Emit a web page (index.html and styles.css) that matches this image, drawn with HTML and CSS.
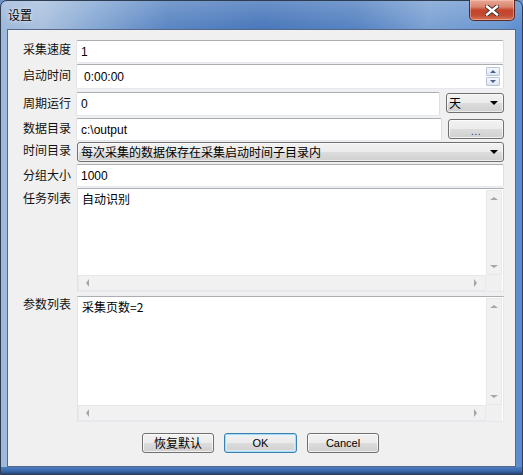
FILE: index.html
```html
<!DOCTYPE html>
<html lang="zh-CN">
<head>
<meta charset="utf-8">
<title>设置</title>
<link rel="stylesheet" href="styles.css">
</head>
<body>
<div class="window">
  <div class="titlebar">
    <span class="title">设置</span>
    <div class="close">
      <svg width="14" height="11" viewBox="0 0 14 11">
        <path d="M2 1.5 L12 9.5 M12 1.5 L2 9.5" stroke="#3a2a2a" stroke-width="4.2" stroke-linecap="square" fill="none"/>
        <path d="M2 1.5 L12 9.5 M12 1.5 L2 9.5" stroke="#ffffff" stroke-width="2.4" stroke-linecap="square" fill="none"/>
      </svg>
    </div>
  </div>
  <div class="client">
    <div class="row r1">
      <div class="label">采集速度</div>
      <div class="edit grow"><span class="val">1</span></div>
    </div>
    <div class="row r2">
      <div class="label">启动时间</div>
      <div class="edit grow spinedit">
        <span class="val time">0:00:00</span>
        <div class="spin">
          <div class="spinbtn"><span class="sarrow up"></span></div>
          <div class="spinbtn"><span class="sarrow down"></span></div>
        </div>
      </div>
    </div>
    <div class="row r3">
      <div class="label">周期运行</div>
      <div class="edit grow"><span class="val">0</span></div>
      <div class="combo small"><span class="ctext">天</span><span class="carrow"></span></div>
    </div>
    <div class="row r4">
      <div class="label">数据目录</div>
      <div class="edit grow"><span class="val">c:\output</span></div>
      <div class="btn browse">...</div>
    </div>
    <div class="row r5">
      <div class="label">时间目录</div>
      <div class="combo wide grow"><span class="ctext">每次采集的数据保存在采集启动时间子目录内</span><span class="carrow"></span></div>
    </div>
    <div class="row r6">
      <div class="label">分组大小</div>
      <div class="edit grow"><span class="val">1000</span></div>
    </div>
    <div class="row r7">
      <div class="label">任务列表</div>
      <div class="memo grow">
        <div class="memotext">自动识别</div>
        <div class="vscroll"><span class="sa up"></span><span class="sa down"></span></div>
        <div class="hscroll"><span class="sa left"></span><span class="sa right"></span></div>
        <div class="corner"></div>
      </div>
    </div>
    <div class="row r8">
      <div class="label">参数列表</div>
      <div class="memo grow">
        <div class="memotext">采集页数=2</div>
        <div class="vscroll"><span class="sa up"></span><span class="sa down"></span></div>
        <div class="hscroll"><span class="sa left"></span><span class="sa right"></span></div>
        <div class="corner"></div>
      </div>
    </div>
    <div class="buttons">
      <div class="btn pb cjk">恢复默认</div>
      <div class="btn pb def">OK</div>
      <div class="btn pb">Cancel</div>
    </div>
  </div>
</div>
</body>
</html>
```

FILE: styles.css
```css
* { box-sizing: border-box; margin: 0; padding: 0; }
html, body { width: 523px; height: 475px; overflow: hidden; }
body {
  margin: 0;
  font-family: "Liberation Sans", "Noto Sans CJK SC", sans-serif;
  font-size: 12px;
  color: #000;
  background: #6e93c4;
}
.window {
  width: 523px;
  height: 475px;
  display: flex;
  flex-direction: column;
  border: 1px solid #2f3d52;
  border-radius: 7px 7px 0 0;
  padding: 0 6px 7px 6px;
  background:
    linear-gradient(0deg, #26467a 0, #3b68a8 3px, #4b7cc0 7px, rgba(0,0,0,0) 7px),
    linear-gradient(180deg, rgba(255,255,255,0.18), rgba(255,255,255,0) 28px),
    linear-gradient(90deg, #9fb9db 0%, #a9c0de 8%, #86a8d4 18%, #5a86c3 32%, #4a78bb 50%, #5683c2 68%, #7ba1d3 82%, #6a97d0 96%, #5b8cd0 100%);
}
.titlebar {
  height: 28px;
  flex: none;
  display: flex;
  align-items: flex-start;
}
.title {
  font-family: "Noto Sans CJK SC", sans-serif;
  font-size: 12px;
  line-height: 14px;
  margin: 7px 0 0 1px;
  color: #000;
  text-shadow: 0 0 5px rgba(235,242,250,0.95), 0 0 2px rgba(235,242,250,0.9);
}
.close {
  margin-left: auto;
  margin-right: 1px;
  margin-top: -1px;
  width: 46px;
  height: 21px;
  border: 1px solid #5c2b25;
  border-top: none;
  border-radius: 0 0 5px 5px;
  background: linear-gradient(180deg, #e9a897 0%, #d9846d 35%, #c4452c 50%, #c14a30 75%, #d6765a 100%);
  box-shadow: inset 0 0 0 1px rgba(255,210,200,0.45);
  display: flex;
  align-items: center;
  justify-content: center;
}
.client {
  flex: 1;
  background: #f0f0f0;
  border: 1px solid #56698a;
  padding: 10px 11px 0 15px;
  display: flex;
  flex-direction: column;
}
.row { display: flex; align-items: flex-start; flex: none; }
.label {
  width: 53px;
  flex: none;
  font-family: "Noto Sans CJK SC", sans-serif;
  font-size: 12px;
  line-height: 16px;
  white-space: nowrap;
  color: #111;
}
.grow { flex: 1; min-width: 0; }

.r1 { height: 23px; margin-bottom: 1px; }
.r1 .label { padding-top: 1px; }
.r2 { height: 25px; margin-bottom: 3px; }
.r2 .label { padding-top: 3px; }
.r3 { height: 24px; margin-bottom: 2px; }
.r3 .label { padding-top: 3px; }
.r4 { height: 23px; margin-bottom: 1px; }
.r4 .label { padding-top: 2px; }
.r5 { height: 21px; margin-bottom: 1px; }
.r5 .label { padding-top: 0px; }
.r6 { height: 23px; margin-bottom: 1px; }
.r6 .label { padding-top: 3px; }
.r7 { height: 104px; margin-bottom: 4px; }
.r7 .label { padding-top: 2px; }
.r8 { height: 126px; }
.r8 .label { padding-top: 0px; }

.edit {
  height: 100%;
  background: #fff;
  border: 1px solid;
  border-color: #abadb3 #dbdfe6 #e3e9ef #e2e3ea;
  border-radius: 2px;
  display: flex;
  align-items: center;
  padding-left: 4px;
}
.val { font-size: 12px; line-height: 14px; }
.val.time { padding-left: 3px; }
.spin {
  margin-left: auto;
  margin-right: 3px;
  display: flex;
  flex-direction: column;
  gap: 1px;
}
.spinbtn {
  width: 14px;
  height: 9px;
  border: 1px solid #b9c4d4;
  border-radius: 1px;
  background: linear-gradient(180deg, #f5f8fc, #dde6f1);
  display: flex;
  align-items: center;
  justify-content: center;
}
.sarrow { width: 0; height: 0; border-left: 3px solid transparent; border-right: 3px solid transparent; }
.sarrow.up { border-bottom: 3px solid #4a5f8a; }
.sarrow.down { border-top: 3px solid #4a5f8a; }

.combo {
  height: 20px;
  border: 1px solid #707070;
  border-radius: 3px;
  background: linear-gradient(180deg, #f2f2f2 0%, #ebebeb 50%, #dddddd 50%, #cfcfcf 100%);
  box-shadow: inset 0 0 0 1px rgba(255,255,255,0.6);
  display: flex;
  align-items: center;
  padding-left: 2px;
  padding-right: 5px;
}
.combo .ctext {
  font-family: "Noto Sans CJK SC", sans-serif;
  font-size: 12px;
  line-height: 16px;
  white-space: nowrap;
}
.combo .carrow {
  margin-left: auto;
  flex: none;
  width: 0; height: 0;
  border-left: 4px solid transparent;
  border-right: 4px solid transparent;
  border-top: 4px solid #000;
}
.combo.small { width: 58px; flex: none; margin-left: 6px; margin-top: 1px; }
.combo.wide { margin-left: 1px; padding-left: 3px; }

.btn {
  flex: none;
  height: 20px;
  border: 1px solid #707070;
  border-radius: 3px;
  background: linear-gradient(180deg, #f2f2f2 0%, #ebebeb 50%, #dddddd 50%, #cfcfcf 100%);
  box-shadow: inset 0 0 0 1px rgba(255,255,255,0.7);
  display: flex;
  align-items: center;
  justify-content: center;
  font-size: 11px;
  line-height: 13px;
}
.browse { width: 56px; margin-left: 6px; margin-top: 1px; padding-top: 4px; color: #1a3d8a; letter-spacing: 0.5px; }

.memo {
  height: 100%;
  margin-left: 1px;
  background: #fff;
  border: 1px solid;
  border-color: #abadb3 #e3e9ef #e3e9ef #e2e3ea;
  display: grid;
  grid-template-columns: 1fr 16px;
  grid-template-rows: 1fr 16px;
  padding: 1px 1px 0 0;
}
.memotext {
  font-family: "Noto Sans CJK SC", sans-serif;
  font-size: 12px;
  line-height: 16px;
  padding: 1px 0 0 4px;
}
.vscroll {
  background: #f1f1f1;
  border: 1px solid #e8e8e8;
  display: flex;
  flex-direction: column;
  justify-content: space-between;
  align-items: center;
  padding: 6px 0 6px 0;
}
.hscroll {
  background: #f1f1f1;
  border: 1px solid #e8e8e8;
  display: flex;
  justify-content: space-between;
  align-items: center;
  padding: 0 8px 0 7px;
}
.corner { background: #f0f0f0; }
.sa { width: 0; height: 0; }
.sa.up { border-left: 4px solid transparent; border-right: 4px solid transparent; border-bottom: 3px solid #a6a6a6; }
.sa.down { border-left: 4px solid transparent; border-right: 4px solid transparent; border-top: 3px solid #a6a6a6; }
.sa.left { border-top: 4px solid transparent; border-bottom: 4px solid transparent; border-right: 3px solid #a6a6a6; }
.sa.right { border-top: 4px solid transparent; border-bottom: 4px solid transparent; border-left: 3px solid #a6a6a6; }

.buttons {
  display: flex;
  margin-top: 11px;
  padding-left: 119px;
  gap: 10px;
}
.pb { width: 72px; }
.pb.cjk { font-family: "Noto Sans CJK SC", sans-serif; font-size: 12px; line-height: 16px; }
.pb.def {
  width: 73px;
  border-color: #3c7fb1;
  box-shadow: inset 0 0 0 1px #a8dcf5, inset 0 0 0 2px rgba(225,242,252,0.7);
}
```
